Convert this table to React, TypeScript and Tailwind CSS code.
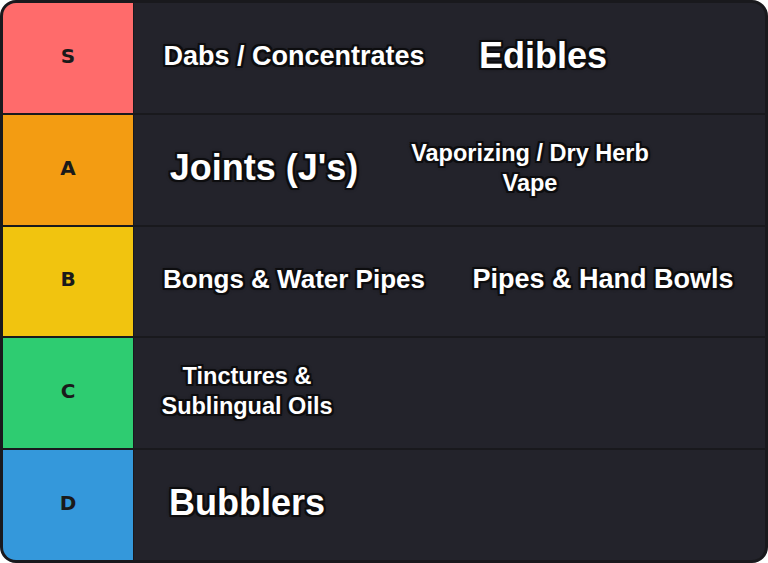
const outline =
  '[text-shadow:-2px_-2px_0_#0d0d0f,2px_-2px_0_#0d0d0f,-2px_2px_0_#0d0d0f,2px_2px_0_#0d0d0f,0_-2px_0_#0d0d0f,0_2px_0_#0d0d0f,-2px_0_0_#0d0d0f,2px_0_0_#0d0d0f,0_0_4px_#000]';

interface Item {
  label: string;
  width: string;
  size: string;
}

interface Tier {
  name: string;
  color: string;
  items: Item[];
}

const tiers: Tier[] = [
  {
    name: 'S',
    color: 'bg-[#ff6b6b]',
    items: [
      { label: 'Dabs / Concentrates', width: 'w-[320px]', size: 'text-[27px]' },
      { label: 'Edibles', width: 'w-[178px]', size: 'text-[36px]' },
    ],
  },
  {
    name: 'A',
    color: 'bg-[#f39c12]',
    items: [
      { label: "Joints (J's)", width: 'w-[260px]', size: 'text-[36px]' },
      { label: 'Vaporizing / Dry Herb Vape', width: 'w-[272px]', size: 'text-[23.5px]' },
    ],
  },
  {
    name: 'B',
    color: 'bg-[#f1c40f]',
    items: [
      { label: 'Bongs & Water Pipes', width: 'w-[320px]', size: 'text-[26px]' },
      { label: 'Pipes & Hand Bowls', width: 'w-[298px]', size: 'text-[27px]' },
    ],
  },
  {
    name: 'C',
    color: 'bg-[#2ecc71]',
    items: [{ label: 'Tinctures & Sublingual Oils', width: 'w-[226px]', size: 'text-[23.5px]' }],
  },
  {
    name: 'D',
    color: 'bg-[#3498db]',
    items: [{ label: 'Bubblers', width: 'w-[226px]', size: 'text-[36px]' }],
  },
];

export default function App() {
  return (
    <div className="w-[768px] h-[563px] bg-white">
      <div className="flex flex-col h-full border-[3px] border-[#19191d] rounded-[16px] overflow-hidden bg-[#23232b]">
        {tiers.map((tier, i) => (
          <div
            key={tier.name}
            className={`flex flex-1 ${i > 0 ? 'border-t-2 border-[#19191d]' : ''}`}
          >
            {/* tier label */}
            <div
              className={`w-[131px] shrink-0 flex items-center justify-center border-r border-[#19191d] ${tier.color}`}
            >
              <span className="font-['DejaVu_Sans',sans-serif] font-bold text-[20px] text-[#1a1a1a] -mt-1">
                {tier.name}
              </span>
            </div>

            {/* items */}
            <div className="flex items-center">
              {tier.items.map((item) => (
                <div
                  key={item.label}
                  className={`${item.width} flex items-center justify-center text-center px-4 -mt-1`}
                >
                  <span
                    className={`font-['Liberation_Sans',Arial,sans-serif] font-bold text-white leading-[30px] ${item.size} ${outline}`}
                  >
                    {item.label}
                  </span>
                </div>
              ))}
            </div>
          </div>
        ))}
      </div>
    </div>
  );
}
